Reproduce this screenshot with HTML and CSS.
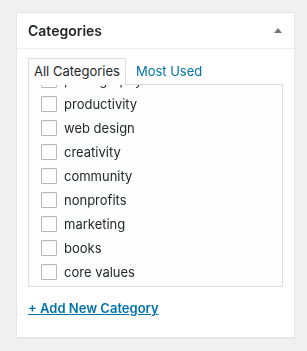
FILE: index.html
```html
<html>
  <head>
    <title>Categories</title>
    <link rel="stylesheet" href="styles.css">
  </head>
  <body>
	<div class="postbox">
		<div class="postbox-header">
			<h2>Categories</h2>
			<span class="toggle"></span>
		</div>
		<div class="inside">
			<ul class="tabs">
				<li class="tab active">All Categories</li>
				<li class="tab"><a href="#">Most Used</a></li>
			</ul>
			<div class="panel" id="checklist">
				<ul class="checklist">
					<li><span class="box"></span>uncategorized</li>
					<li><span class="box"></span>design</li>
					<li><span class="box"></span>photography</li>
					<li><span class="box"></span>productivity</li>
					<li><span class="box"></span>web design</li>
					<li><span class="box"></span>creativity</li>
					<li><span class="box"></span>community</li>
					<li><span class="box"></span>nonprofits</li>
					<li><span class="box"></span>marketing</li>
					<li><span class="box"></span>books</li>
					<li><span class="box"></span>core values</li>
				</ul>
			</div>
			<p class="add-new"><a href="#">+ Add New Category</a></p>
		</div>
	</div>
    <script>
// List is shown scrolled a little, as in the editor
document.getElementById('checklist').scrollTop = 73;
    </script>
  </body>
</html>
```

FILE: styles.css
```css
body {
	margin: 0;
	padding: 12px 0 0 16px;
	background-color: #f1f1f1;
	color: #23282d;
	font-family: Inter, 'Liberation Sans', sans-serif;
	font-size: 13px;
}

a {
	color: #0073aa;
}

.postbox {
	width: 277px;
	background-color: #fff;
	border: 1px solid #e5e5e5;
	box-shadow: 0 1px 1px rgba(0, 0, 0, 0.04);
}

.postbox-header {
	display: flex;
	align-items: center;
	justify-content: space-between;
	height: 35px;
	padding: 0 12px 0 11px;
	border-bottom: 1px solid #eee;
}

.postbox-header h2 {
	margin: 0;
	font-size: 14px;
	font-weight: 600;
}

.toggle {
	width: 0;
	height: 0;
	border-left: 4px solid transparent;
	border-right: 4px solid transparent;
	border-bottom: 5px solid #72777c;
}

.inside {
	padding: 9px 11px 20px;
}

.tabs {
	display: flex;
	margin: 0;
	padding: 0;
	list-style: none;
}

.tab {
	padding: 3px 5px 4px;
	line-height: 18px;
	border: 1px solid transparent;
	border-bottom: none;
	margin-right: 4px;
}

.tab a {
	text-decoration: none;
}

.tab.active {
	background-color: #fdfdfd;
	border-color: #ddd;
	margin-bottom: -1px;
	position: relative;
}

.panel {
	height: 201px;
	overflow-y: auto;
	scrollbar-width: none;
	background-color: #fdfdfd;
	border: 1px solid #ddd;
}

.checklist {
	margin: 0;
	padding: 8px 12px 8px;
	list-style: none;
}

.checklist li {
	display: flex;
	align-items: center;
	height: 24px;
}

.box {
	width: 14px;
	height: 14px;
	margin-right: 7px;
	background-color: #fff;
	border: 1px solid #b4b9be;
	border-radius: 1px;
	box-shadow: inset 0 1px 2px rgba(0, 0, 0, 0.07);
}

.add-new {
	margin: 12px 0 0;
	line-height: 18px;
	font-weight: 600;
}

.add-new a {
	text-decoration: underline;
}
```
